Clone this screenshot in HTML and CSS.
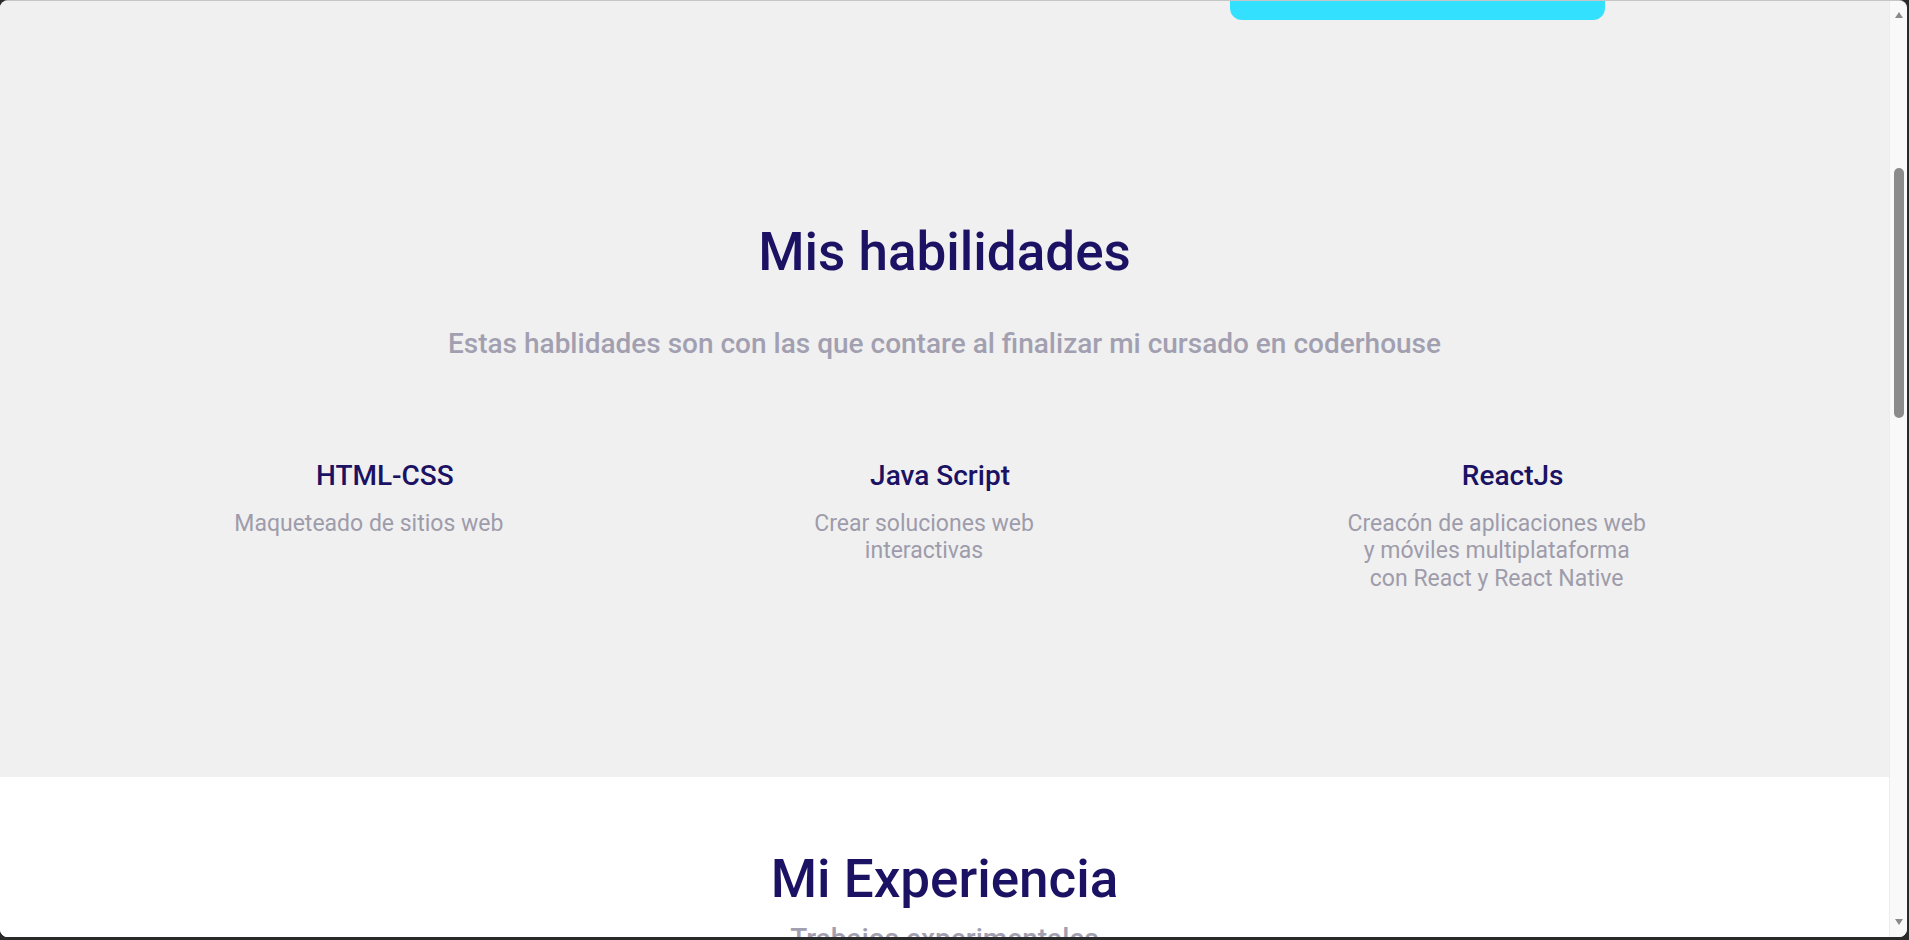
FILE: index.html
```html
<!DOCTYPE html>
<html lang="es">
<head>
<meta charset="utf-8">
<title>Mis habilidades</title>
<link rel="stylesheet" href="styles.css">
</head>
<body>
<div class="window">
  <main class="page">
    <section class="hero-tail">
      <div class="hero-btn"></div>
    </section>
    <section class="skills">
      <h2 class="section-title">Mis habilidades</h2>
      <p class="section-lead">Estas hablidades son con las que contare al finalizar mi cursado en coderhouse</p>
      <div class="skill-grid">
        <article class="skill">
          <h3 class="skill-name">HTML-CSS</h3>
          <p class="skill-desc">Maqueteado de sitios web</p>
        </article>
        <article class="skill">
          <h3 class="skill-name">Java Script</h3>
          <p class="skill-desc">Crear soluciones web interactivas</p>
        </article>
        <article class="skill">
          <h3 class="skill-name">ReactJs</h3>
          <p class="skill-desc">Creacón de aplicaciones web y móviles multiplataforma con React y React Native</p>
        </article>
      </div>
    </section>
    <section class="experience">
      <h2 class="section-title">Mi Experiencia</h2>
      <p class="section-lead exp-lead">Trabajos experimentales</p>
    </section>
  </main>
  <div class="scrollbar">
    <span class="arrow arrow-up"></span>
    <span class="thumb"></span>
    <span class="arrow arrow-down"></span>
  </div>
</div>
</body>
</html>
```

FILE: styles.css
```css
html, body {
  margin: 0;
  padding: 0;
  height: 100%;
  background: #2a2a2a;
  overflow: hidden;
}

body {
  font-family: Roboto, "Liberation Sans", Arial, sans-serif;
}

.window {
  display: flex;
  height: 936px;
  margin-right: 2px;
  border-top: 1px solid #c6c6c6;
  border-radius: 8px;
  overflow: hidden;
  background: #ffffff;
}

.page {
  flex: 1;
  min-width: 0;
  overflow: hidden;
  background: #ffffff;
}

.hero-tail {
  display: flex;
  justify-content: flex-end;
  padding-right: 284px;
  background: #f0f0f0;
  height: 19px;
}

.hero-btn {
  width: 375px;
  height: 60px;
  margin-top: -41px;
  border-radius: 12px;
  background: #33e1ff;
}

.skills {
  box-sizing: border-box;
  height: 757px;
  padding-top: 201px;
  background: #f0f0f0;
  text-align: center;
}

.section-title {
  margin: 0;
  font-size: 53px;
  line-height: 1.2;
  font-weight: 500;
  color: #1b1263;
}

.section-lead {
  margin: 42px 0 0;
  font-size: 28px;
  line-height: 1.2;
  font-weight: 500;
  color: #a2a0b0;
}

.skill-grid {
  display: flex;
  justify-content: space-around;
  align-items: flex-start;
  padding: 0 106px 0 100px;
  margin-top: 99px;
}

.skill {
  max-width: 304px;
  display: flex;
  flex-direction: column;
  align-items: center;
}

.skill-name {
  margin: 0;
  padding-left: 32px;
  font-size: 28px;
  line-height: 1.2;
  font-weight: 500;
  color: #1b1263;
}

.skill-desc {
  margin: 17px 0 0;
  font-size: 23px;
  line-height: 27.5px;
  font-weight: 400;
  color: #9e9cab;
}

.experience {
  background: #ffffff;
  padding-top: 71px;
  text-align: center;
}

.exp-lead {
  margin-top: 10px;
}

.scrollbar {
  width: 17px;
  flex: none;
  display: flex;
  flex-direction: column;
  align-items: center;
  background: #f9f9f9;
  border-left: 1px solid #ececec;
}

.arrow {
  width: 0;
  height: 0;
  border-left: 4.5px solid transparent;
  border-right: 4.5px solid transparent;
}

.arrow-up {
  margin-top: 11px;
  border-bottom: 6px solid #8a8a8a;
}

.thumb {
  width: 10px;
  height: 250px;
  margin-top: 150px;
  border-radius: 5px;
  background: #8b8b8b;
}

.arrow-down {
  margin-top: auto;
  margin-bottom: 12px;
  border-top: 6px solid #8a8a8a;
}
```
